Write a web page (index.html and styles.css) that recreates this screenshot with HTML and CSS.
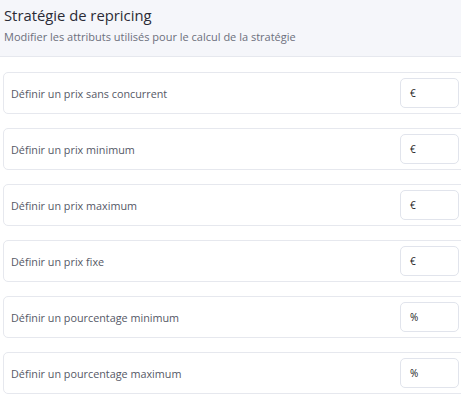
FILE: index.html
```html
<!doctype html>
<html>
    <head>
        <meta charset="UTF-8">
        <meta name="viewport" content="width=device-width, initial-scale=1">
        <title>Stratégie de repricing</title>
        <link rel="stylesheet" href="styles.css">
    </head>
    <body>
        <header class="panel-head">
            <h1>Stratégie de repricing</h1>
            <p>Modifier les attributs utilisés pour le calcul de la stratégie</p>
        </header>

        <section class="fields">
            <div class="field">
                <label>Définir un prix sans concurrent</label>
                <div class="unit-input">€</div>
            </div>
            <div class="field">
                <label>Définir un prix minimum</label>
                <div class="unit-input">€</div>
            </div>
            <div class="field">
                <label>Définir un prix maximum</label>
                <div class="unit-input">€</div>
            </div>
            <div class="field">
                <label>Définir un prix fixe</label>
                <div class="unit-input">€</div>
            </div>
            <div class="field">
                <label>Définir un pourcentage minimum</label>
                <div class="unit-input">%</div>
            </div>
            <div class="field">
                <label>Définir un pourcentage maximum</label>
                <div class="unit-input">%</div>
            </div>
        </section>
    </body>
</html>
```

FILE: styles.css
```css
:root {
    --bg-soft: #f5f6fa;
    --line: #e6e8ee;
    --ink: #2b2b36;
    --muted: #6c6f7c;
}

html, body {
    margin: 0;
    background: #fff;
    overflow: hidden;
}

* {
    font-family: "Open Sans", sans-serif;
    box-sizing: border-box;
}

.panel-head {
    background: var(--bg-soft);
    border-bottom: 1px solid var(--line);
    padding: 5px 4px 0;
    height: 57px;
}

.panel-head h1 {
    margin: 0;
    font-size: 14.8px;
    font-weight: 500;
    color: var(--ink);
    line-height: 20px;
}

.panel-head p {
    margin: 5px 0 0;
    font-size: 11px;
    color: var(--muted);
    line-height: 14px;
}

.fields {
    display: flex;
    flex-direction: column;
    gap: 14px;
    padding: 15px 0 0 3px;
    width: 467px;
}

.field {
    display: flex;
    align-items: center;
    justify-content: space-between;
    height: 42px;
    border: 1px solid var(--line);
    border-radius: 5px;
    padding: 0 7px 0 7px;
}

.field label {
    font-size: 10.8px;
    color: #555866;
}

.unit-input {
    width: 59px;
    height: 30px;
    border: 1px solid #e1e4ec;
    border-radius: 5px;
    padding-left: 9px;
    display: flex;
    align-items: center;
    font-size: 10px;
    color: #222;
}
```
